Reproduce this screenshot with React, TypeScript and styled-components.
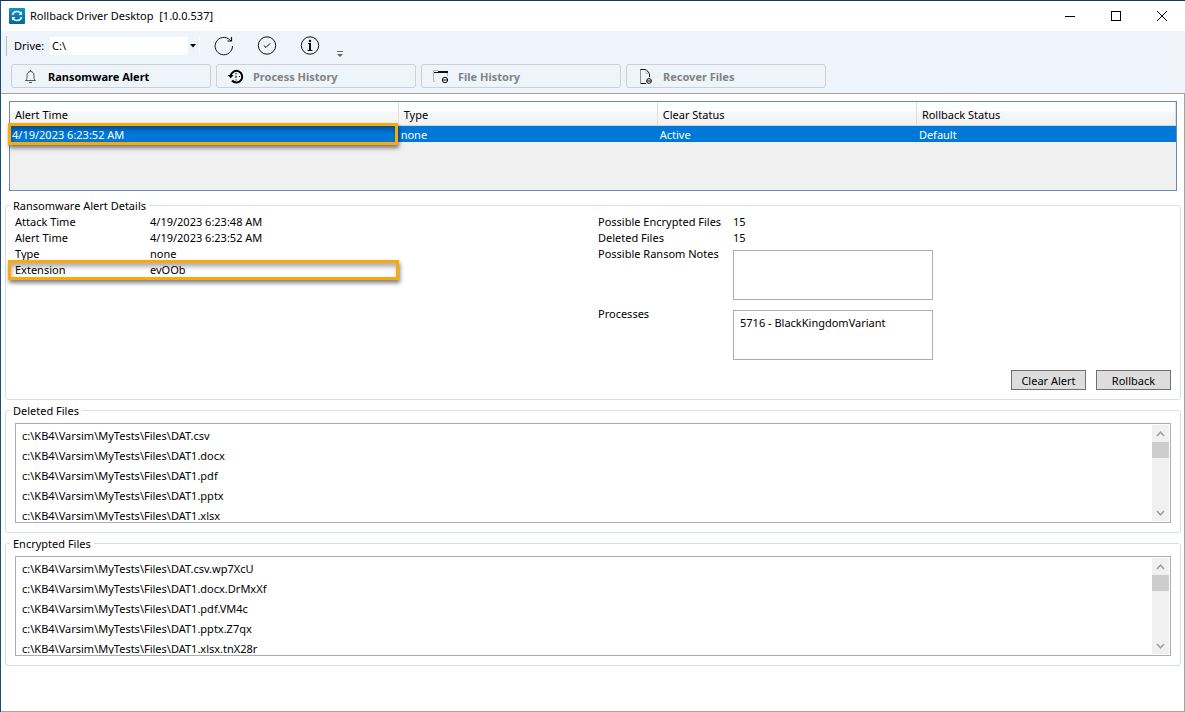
import React from "react";
import styled, { createGlobalStyle, css } from "styled-components";

const font = `"Noto Sans", "Open Sans", sans-serif`;

const GlobalStyle = createGlobalStyle`
  *, *::before, *::after { box-sizing: border-box; }
  body { margin: 0; background: #fff; color: #000; font: 11px/16px ${font}; }
  button, select, textarea { font: inherit; color: inherit; margin: 0; }
  p, dl, dd, ul { margin: 0; padding: 0; }
`;

const Window = styled.div`
  min-height: 100vh;
  display: flex;
  flex-direction: column;
  border-top: 1px solid #14365f;
  border-left: 1px solid #1c4f76;
`;

const TitleBar = styled.header`
  height: 30px;
  display: flex;
  align-items: center;
  padding-left: 8px;
  gap: 5px;
`;

const Title = styled.h1`
  margin: 0;
  flex: 1;
  font-size: 11px;
  font-weight: 400;
  white-space: pre;
`;

const CaptionButton = styled.button`
  width: 46px;
  height: 30px;
  padding: 0;
  display: grid;
  place-items: center;
  border: 0;
  background: none;
`;

const CaptionButtons = styled.div`
  display: flex;
`;

const Ribbon = styled.div`
  height: 62px;
  display: flex;
  flex-direction: column;
  gap: 5px;
  padding: 1px 0 0 5px;
  background: linear-gradient(to left, #f0f3f9 17px, #edf4fc 17px);
`;

const Toolbar = styled.div`
  height: 27px;
  display: flex;
  align-items: center;
`;

const Grip = styled.span`
  width: 1px;
  height: 20px;
  margin-right: 7px;
  background: #b4b8bd;
`;

const DriveLabel = styled.label`
  width: 36px;
  padding-top: 1px;
`;

const SelectWrap = styled.span`
  position: relative;
  width: 150px;
  height: 18px;
  margin-right: 14px;
`;

const Select = styled.select`
  appearance: none;
  width: 100%;
  height: 100%;
  padding: 0 2px;
  border: 0;
  border-radius: 0;
  background: linear-gradient(to left, #fff 1px, #edf4fc 1px, #edf4fc 12px, #fff 12px);
`;

const SelectArrow = styled.svg`
  position: absolute;
  right: 4px;
  top: 7px;
  pointer-events: none;
`;

const ToolButton = styled.button`
  width: 20px;
  height: 20px;
  margin-right: 23px;
  padding: 0;
  border: 0;
  background: none;
  svg { display: block; }
`;

const OverflowButton = styled.button`
  width: 6px;
  height: 22px;
  padding: 0;
  margin-left: -6px;
  display: flex;
  align-items: flex-end;
  border: 0;
  background: none;
`;

const Tabs = styled.nav`
  display: flex;
  gap: 5px;
  padding-left: 5px;
`;

const Tab = styled.button<{ $active?: boolean }>`
  width: 200px;
  height: 24px;
  padding: 1px 11px 0;
  display: flex;
  align-items: center;
  gap: 9px;
  border: 1px solid #d0d0d0;
  border-radius: 3px;
  background: transparent;
  font-weight: 700;
  color: ${(p) => (p.$active ? "#000" : "#838383")};
`;

const Main = styled.main`
  flex: 1;
  display: flex;
  flex-direction: column;
  padding: 7px 3px 0 4px;
  border: solid #a5a5a5;
  border-width: 1px 1px 1px 0;
`;

const GridFrame = styled.div`
  height: 90px;
  margin: 0 4px 6px;
  border: 1px solid #688caf;
  background: #f0f0f0;
`;

const Table = styled.table`
  width: 100%;
  table-layout: fixed;
  border-collapse: separate;
  border-spacing: 0;
`;

const HeadCell = styled.th<{ $wide?: boolean }>`
  width: ${(p) => (p.$wide ? "33.33%" : "auto")};
  height: 24px;
  padding: 2px 5px 0;
  font-weight: 400;
  text-align: left;
  border-bottom: 1px solid #d5d5d5;
  border-right: 1px solid #dedfe1;
  background: linear-gradient(#fff 40%, #f7f8fa 42%, #f1f2f4);
`;

const Cell = styled.td`
  position: relative;
  height: 16px;
  padding: 1px 2px 0;
  line-height: 15px;
  color: #fff;
  background: #0078d7;
`;

const Marker = styled.span<{ $place: string }>`
  position: absolute;
  z-index: 1;
  inset: ${(p) => p.$place};
  border: 3px solid #f8a90c;
  box-shadow: 1px 3px 4px rgba(0, 0, 0, 0.5), inset 1px 4px 4px rgba(0, 0, 0, 0.3);
  pointer-events: none;
`;

const Group = styled.fieldset<{ $tight?: boolean }>`
  min-width: 0;
  margin: 0 0 2px;
  padding: ${(p) => (p.$tight ? "1px" : "5px")} 9px 9px;
  border: 1px solid #d5dfe5;
  border-radius: 3px;
`;

const Legend = styled.legend`
  height: 16px;
  margin-left: -5px;
  padding: 0 3px;
  line-height: 18px;
`;

const Details = styled.div`
  display: grid;
  grid-template-columns: calc(50% + 5px) 1fr;
`;

const Fields = styled.dl<{ $narrow?: boolean }>`
  ${(p) => p.$narrow && css`width: 67%;`}
`;

const Field = styled.div<{ $tall?: boolean }>`
  position: relative;
  display: grid;
  grid-template-columns: 135px 1fr;
  ${(p) => p.$tall && css`height: 60px;`}
`;

const Box = styled.textarea`
  display: block;
  width: 200px;
  height: 50px;
  margin-top: 4px;
  padding: 4px 6px;
  resize: none;
  border: 1px solid #abadb3;
  border-radius: 0;
  background: #fff;
`;

const Actions = styled.div`
  display: flex;
  justify-content: flex-end;
  gap: 10px;
  margin-top: 4px;
`;

const ActionButton = styled.button`
  width: 75px;
  height: 20px;
  padding: 1px 0 0;
  border: 1px solid #707070;
  background: #ddd;
`;

const ListFrame = styled.div`
  height: 100px;
  display: flex;
  padding: 1px;
  border: 1px solid #abadb3;
`;

const List = styled.ul`
  flex: 1;
  overflow: hidden;
  padding: 1px 5px;
  list-style: none;
`;

const Item = styled.li`
  line-height: 20px;
`;

const ScrollBar = styled.div`
  width: 17px;
  display: flex;
  flex-direction: column;
  background: #f0f0f0;
`;

const ScrollButton = styled.button`
  height: 17px;
  padding: 0;
  display: grid;
  place-items: center;
  border: 0;
  background: none;
`;

const ScrollTrack = styled.div`
  flex: 1;
`;

const Thumb = styled.div`
  height: 16px;
  background: #cdcdcd;
`;

const Logo = () => (
  <svg width="16" height="16" viewBox="0 0 16 16" aria-hidden="true">
    <defs>
      <linearGradient id="logo" x1="0" y1="0" x2="0" y2="1">
        <stop offset="0" stopColor="#1593c8" />
        <stop offset="1" stopColor="#04679c" />
      </linearGradient>
    </defs>
    <rect width="16" height="16" rx="1" fill="url(#logo)" />
    <path d="M3.500 7C4 4.600 6 3.500 8 3.500C9.600 3.500 10.800 4 11.600 5M12.500 9C12 11.400 10 12.500 8 12.500C6.400 12.500 5.200 12 4.400 11" fill="none" stroke="#fff" strokeWidth="1.500" />
    <path d="M13 3.500V7H9.500zM3 12.500V9H6.500z" fill="#fff" />
  </svg>
);

const RefreshIcon = () => (
  <svg width="20" height="20" viewBox="0 0 20 20" fill="none" stroke="#111" aria-hidden="true">
    <path d="M18.500 10A8.700 8.700 0 1 1 15.800 3.800L17 5" />
    <path d="M17.500 1V5H13.500" strokeWidth="1.200" />
  </svg>
);

const CheckIcon = () => (
  <svg width="20" height="20" viewBox="0 0 20 20" fill="none" stroke="#111" aria-hidden="true">
    <circle cx="10" cy="9.500" r="8.700" />
    <path d="M6.800 9.500L9 11.500L13.200 7.300" />
  </svg>
);

const InfoIcon = () => (
  <svg width="20" height="20" viewBox="0 0 20 20" fill="none" stroke="#111" aria-hidden="true">
    <circle cx="10" cy="9.500" r="8.700" />
    <path d="M8 7.500H11M7.500 14.500H12.500" />
    <path d="M10 7V14.500" strokeWidth="2" />
    <circle cx="10" cy="5" r="1.200" fill="#111" stroke="none" />
  </svg>
);

const BellIcon = () => (
  <svg width="16" height="16" viewBox="0 0 16 16" fill="none" stroke="#444" aria-hidden="true">
    <path d="M7.500 1V2.500M2.500 11.500C4 10.500 4 9.500 4 6.500C4 4 5.500 2.500 7.500 2.500S11 4 11 6.500C11 9.500 11 10.500 12.500 11.500zM6 13.500H9" strokeWidth="0.900" />
  </svg>
);

const HistoryIcon = () => (
  <svg width="16" height="16" viewBox="0 0 16 16" fill="none" stroke="#000" strokeWidth="2" aria-hidden="true">
    <path d="M4 11.500A5.800 5.800 0 1 0 2.700 6.500" />
    <path d="M0 6H5.500L2.700 9.500z" fill="#000" stroke="none" />
    <path d="M8 4V5.300M8 6.800V8.800M11 7.500H12M8 10.500V11.500" strokeWidth="1.200" />
  </svg>
);

const FolderIcon = () => (
  <svg width="16" height="16" viewBox="0 0 16 16" fill="none" stroke="#111" aria-hidden="true">
    <path d="M2 12.500H0.500V1.500H5M14.500 3.500V7" stroke="#b3b8be" />
    <path d="M5 2.500H15M1 3.500H15" />
    <circle cx="12" cy="11" r="2.700" />
    <path d="M10 11H14" />
  </svg>
);

const FileIcon = () => (
  <svg width="16" height="16" viewBox="0 0 16 16" fill="none" stroke="#111" aria-hidden="true">
    <path d="M2.500 14V0.500" stroke="#8c9196" />
    <path d="M2.500 0.500H8L11.500 4.500V8M2.500 14.500H8" />
    <path d="M8 0.500V4.500H11.500" stroke="#b3b8be" />
    <circle cx="11" cy="12" r="2.400" />
    <path d="M9 12H13" />
  </svg>
);

const Chevron = ({ down }: { down?: boolean }) => (
  <svg width="9" height="6" viewBox="0 0 9 6" fill="none" stroke="#9d9d9d" strokeWidth="1.500" aria-hidden="true">
    <path d={down ? "M1 1L4.500 4.800L8 1" : "M1 5L4.500 1.200L8 5"} />
  </svg>
);

const FileList = ({ title, files }: { title: string; files: string[] }) => (
  <Group>
    <Legend>{title}</Legend>
    <ListFrame>
      <List>
        {files.map((f) => (
          <Item key={f}>{f}</Item>
        ))}
      </List>
      <ScrollBar>
        <ScrollButton aria-label="Scroll up"><Chevron /></ScrollButton>
        <ScrollTrack><Thumb /></ScrollTrack>
        <ScrollButton aria-label="Scroll down"><Chevron down /></ScrollButton>
      </ScrollBar>
    </ListFrame>
  </Group>
);

const root = "c:\\KB4\\Varsim\\MyTests\\Files\\";
const deleted = ["DAT.csv", "DAT1.docx", "DAT1.pdf", "DAT1.pptx", "DAT1.xlsx"].map((f) => root + f);
const encrypted = ["DAT.csv.wp7XcU", "DAT1.docx.DrMxXf", "DAT1.pdf.VM4c", "DAT1.pptx.Z7qx", "DAT1.xlsx.tnX28r"].map((f) => root + f);

export default function App() {
  return (
    <>
      <GlobalStyle />
      <Window>
        <TitleBar>
          <Logo />
          <Title>{"Rollback Driver Desktop  [1.0.0.537]"}</Title>
          <CaptionButtons>
            <CaptionButton aria-label="Minimize">
              <svg width="10" height="10" stroke="#000"><path d="M0 5.500H10" /></svg>
            </CaptionButton>
            <CaptionButton aria-label="Maximize">
              <svg width="10" height="10" stroke="#000" fill="none"><rect x="0.500" y="0.500" width="9" height="9" /></svg>
            </CaptionButton>
            <CaptionButton aria-label="Close">
              <svg width="10" height="10" stroke="#000"><path d="M0 0L10 10M10 0L0 10" /></svg>
            </CaptionButton>
          </CaptionButtons>
        </TitleBar>

        <Ribbon>
          <Toolbar>
            <Grip />
            <DriveLabel htmlFor="drive">Drive:</DriveLabel>
            <SelectWrap>
              <Select id="drive" defaultValue="c"><option value="c">C:\</option></Select>
              <SelectArrow width="6" height="4"><path d="M0 0H6L3 3.500z" /></SelectArrow>
            </SelectWrap>
            <ToolButton aria-label="Refresh"><RefreshIcon /></ToolButton>
            <ToolButton aria-label="Check"><CheckIcon /></ToolButton>
            <ToolButton aria-label="About"><InfoIcon /></ToolButton>
            <OverflowButton aria-label="More tools">
              <svg width="6" height="6"><path d="M0 0H6V1H0zM0 3H6L3 6z" fill="#666" /></svg>
            </OverflowButton>
          </Toolbar>
          <Tabs>
            <Tab $active><BellIcon />Ransomware Alert</Tab>
            <Tab><HistoryIcon />Process History</Tab>
            <Tab><FolderIcon />File History</Tab>
            <Tab><FileIcon />Recover Files</Tab>
          </Tabs>
        </Ribbon>

        <Main>
          <GridFrame>
            <Table>
              <thead>
                <tr>
                  <HeadCell $wide>Alert Time</HeadCell>
                  <HeadCell>Type</HeadCell>
                  <HeadCell>Clear Status</HeadCell>
                  <HeadCell>Rollback Status</HeadCell>
                </tr>
              </thead>
              <tbody>
                <tr>
                  <Cell>4/19/2023 6:23:52 AM<Marker $place="-3px 1px -3px -2px" /></Cell>
                  <Cell>none</Cell>
                  <Cell>Active</Cell>
                  <Cell>Default</Cell>
                </tr>
              </tbody>
            </Table>
          </GridFrame>

          <Group $tight>
            <Legend>Ransomware Alert Details</Legend>
            <Details>
              <Fields $narrow>
                <Field><dt>Attack Time</dt><dd>4/19/2023 6:23:48 AM</dd></Field>
                <Field><dt>Alert Time</dt><dd>4/19/2023 6:23:52 AM</dd></Field>
                <Field><dt>Type</dt><dd>none</dd></Field>
                <Field>
                  <dt>Extension</dt><dd>evOOb</dd>
                  <Marker $place="-2px 7px -2px -7px" />
                </Field>
              </Fields>
              <Fields>
                <Field><dt>Possible Encrypted Files</dt><dd>15</dd></Field>
                <Field><dt>Deleted Files</dt><dd>15</dd></Field>
                <Field $tall>
                  <dt><label htmlFor="notes">Possible Ransom Notes</label></dt>
                  <dd><Box id="notes" readOnly /></dd>
                </Field>
                <Field $tall>
                  <dt><label htmlFor="processes">Processes</label></dt>
                  <dd><Box id="processes" readOnly defaultValue="5716 - BlackKingdomVariant" /></dd>
                </Field>
              </Fields>
            </Details>
            <Actions>
              <ActionButton>Clear Alert</ActionButton>
              <ActionButton>Rollback</ActionButton>
            </Actions>
          </Group>

          <FileList title="Deleted Files" files={deleted} />
          <FileList title="Encrypted Files" files={encrypted} />
        </Main>
      </Window>
    </>
  );
}
